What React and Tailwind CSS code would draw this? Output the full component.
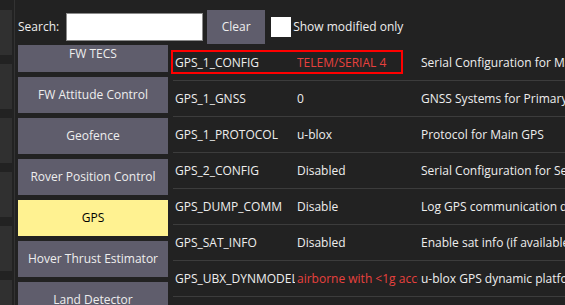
import React from "react";

const groups = [
  { name: "FW TECS" },
  { name: "FW Attitude Control" },
  { name: "Geofence" },
  { name: "Rover Position Control" },
  { name: "GPS", active: true },
  { name: "Hover Thrust Estimator" },
  { name: "Land Detector" },
];

const rows = [
  { n: "GPS_1_CONFIG", v: "TELEM/SERIAL 4", d: "Serial Configuration for Main GPS", red: true, box: true },
  { n: "GPS_1_GNSS", v: "0", d: "GNSS Systems for Primary GPS" },
  { n: "GPS_1_PROTOCOL", v: "u-blox", d: "Protocol for Main GPS" },
  { n: "GPS_2_CONFIG", v: "Disabled", d: "Serial Configuration for Secondary GPS" },
  { n: "GPS_DUMP_COMM", v: "Disable", d: "Log GPS communication data" },
  { n: "GPS_SAT_INFO", v: "Disabled", d: "Enable sat info (if available)" },
  { n: "GPS_UBX_DYNMODEL", v: "airborne with <1g acceleration", d: "u-blox GPS dynamic platform model", red: true },
  { n: "GPS_YAW_OFFSET", v: "0.0", d: "Heading/Yaw offset" },
];

export default function App() {
  return (
    <div
      className="w-[565px] h-[305px] bg-[#222222] flex overflow-hidden text-[12px] text-[#eeeeee]"
      style={{ fontFamily: '"Open Sans", "Noto Sans", sans-serif' }}
    >
      {/* left strip */}
      <div className="w-[12px] flex flex-col gap-[9px] pt-[10px] shrink-0">
        {[0, 1, 2, 3, 4, 5].map((i) => (
          <div key={i} className="h-[45px] shrink-0 bg-[#303030]" />
        ))}
      </div>
      <div className="w-[2px] shrink-0" />
      <div className="w-[1px] shrink-0 bg-[#333333]" />
      {/* main */}
      <div className="flex-1 flex flex-col pl-[3px] min-w-0">
        <div className="h-[34px] mt-[10px] mb-[1px] flex items-center shrink-0">
          <span className="leading-none">Search:</span>
          <div className="ml-[7px] w-[137px] h-[28px] bg-white border border-[#8a8a8a]" />
          <div className="ml-[4px] w-[58px] h-[34px] bg-[#5f5d6c] flex items-center justify-center">
            Clear
          </div>
          <div className="ml-[6px] w-[20px] h-[20px] bg-white" />
          <span className="ml-[2px] whitespace-nowrap">Show modified only</span>
        </div>
        <div className="flex flex-1 min-h-0">
          <div className="w-[150px] shrink-0 overflow-hidden">
            <div className="-mt-[9px] flex flex-col gap-[5px]">
              {groups.map((g) => (
                <div
                  key={g.name}
                  className={
                    g.active
                      ? "h-[36px] shrink-0 bg-[#fff291] text-black flex items-center justify-center"
                      : "h-[36px] shrink-0 bg-[#5f5d6c] flex items-center justify-center"
                  }
                >
                  {g.name}
                </div>
              ))}
            </div>
          </div>
          <div className="flex-1 ml-[5px] min-w-0 flex flex-col">
            {rows.map((r) => (
              <div
                key={r.n}
                className="relative h-[36px] shrink-0 border-b border-[#3c3c3c] flex items-center pl-[2px] whitespace-nowrap"
              >
                {r.box && (
                  <div className="absolute left-[-2px] top-[5px] w-[232px] h-[24px] border-2 border-[#ff0000]" />
                )}
                <div className="w-[120px] shrink-0 overflow-hidden">{r.n}</div>
                <div
                  className={
                    r.red
                      ? "ml-[2px] w-[121px] shrink-0 overflow-hidden text-[#e8413e]"
                      : "ml-[2px] w-[121px] shrink-0 overflow-hidden"
                  }
                >
                  {r.v}
                </div>
                <div className="ml-[3px]">{r.d}</div>
              </div>
            ))}
          </div>
        </div>
      </div>
    </div>
  );
}
